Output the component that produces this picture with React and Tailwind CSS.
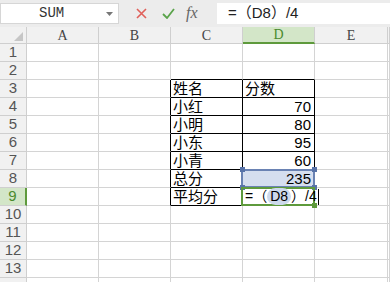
import React from 'react';

const COLS = ['A', 'B', 'C', 'D', 'E', ''];

const DATA = {
  3: ['姓名', '分数'],
  4: ['小红', '70'],
  5: ['小明', '80'],
  6: ['小东', '95'],
  7: ['小青', '60'],
  8: ['总分', '235'],
  9: ['平均分', null],
};

const inTable = (r) => r >= 3 && r <= 9;

function Cell({ r, c }) {
  // c: 0=A ... 5=extra
  let br = 'border-r-[#d4d4d4]';
  let bb = 'border-b-[#d4d4d4]';
  if ((c === 1 || c === 2 || c === 3) && inTable(r)) br = 'border-r-black';
  if ((c === 2 || c === 3) && (r === 2 || inTable(r))) bb = 'border-b-black';

  const row = DATA[r];
  let content = null;

  if (row && c === 2) {
    content = <span className="pl-[2px] text-[15px] leading-[17px] text-black">{row[0]}</span>;
  }

  if (row && c === 3) {
    if (r === 9) {
      return (
        <div className={`relative z-10 h-[18px] border-r border-b ${br} ${bb}`}>
          <div className="absolute -left-[2px] -top-[1px] h-[19px] w-[74px] border-2 border-[#5e9a3c]" />
          <div className="absolute -bottom-[3px] -right-[3px] h-[5px] w-[5px] bg-[#5e9a3c]" />
          <div className="relative flex h-full items-center whitespace-nowrap pl-[2px] text-[14px] leading-[17px] text-black">
            <span className="shrink-0">=（</span>
            <span className="shrink-0 rounded-full bg-[#cdd9ec] px-[3px]">D8</span>
            <span className="shrink-0">）/4</span>
            <span className="ml-[1px] h-[16px] w-[1px] shrink-0 bg-black" />
          </div>
        </div>
      );
    }
    if (r === 8) {
      return (
        <div className={`relative h-[18px] border-r border-b ${br} ${bb} bg-[#d5deef]`}>
          <div className="absolute -left-[2px] -top-[1px] h-[19px] w-[74px] border-2 border-[#6a82b3]" />
          <div className="absolute -left-[3px] -top-[3px] h-[5px] w-[5px] bg-[#5873a8]" />
          <div className="absolute -right-[3px] -top-[3px] h-[5px] w-[5px] bg-[#5873a8]" />
          <div className="absolute -bottom-[3px] -left-[3px] h-[5px] w-[5px] bg-[#5873a8]" />
          <div className="absolute -bottom-[3px] -right-[3px] h-[5px] w-[5px] bg-[#5873a8]" />
          <div className="relative flex h-full items-center justify-end pr-[3px] text-[15px] leading-[17px] text-black">
            {row[1]}
          </div>
        </div>
      );
    }
    const isNum = /^\d+$/.test(row[1]);
    content = (
      <span
        className={`w-full text-[15px] leading-[17px] text-black ${isNum ? 'pr-[3px] text-right' : 'pl-[2px]'}`}
      >
        {row[1]}
      </span>
    );
  }

  return (
    <div className={`flex h-[18px] items-center border-r border-b ${br} ${bb}`}>{content}</div>
  );
}

export default function App() {
  const rows = Array.from({ length: 14 }, (_, i) => i + 1);

  return (
    <div
      className="h-[282px] w-[390px] overflow-hidden bg-white"
      style={{ fontFamily: '"Liberation Sans", "Noto Sans CJK SC", sans-serif' }}
    >
      {/* toolbar */}
      <div className="flex h-[27px] items-center bg-[#ececec] pb-[1px]">
        <div className="relative flex h-[21px] w-[119px] items-center border border-[#d6d6d6] bg-white">
          <span className="ml-[38px] font-['Liberation_Mono'] text-[14px] text-[#333]">SUM</span>
          <svg className="absolute right-[5px] top-[8px]" width="7" height="4" viewBox="0 0 7 4">
            <path d="M0 0h7L3.5 4z" fill="#777" />
          </svg>
        </div>
        <div className="flex w-[98px] items-center">
          <svg className="ml-[17px]" width="11" height="11" viewBox="0 0 11 11">
            <path d="M1 1l9 9M10 1l-9 9" stroke="#e0605a" strokeWidth="1.6" />
          </svg>
          <svg className="ml-[15px]" width="13" height="11" viewBox="0 0 13 11">
            <path d="M1 6l4 4 7-9" stroke="#5aa34a" strokeWidth="1.8" fill="none" />
          </svg>
          <span className="ml-[11px] font-['Liberation_Serif'] text-[16px] italic text-[#666]">fx</span>
        </div>
        <div className="flex h-[21px] flex-1 items-center whitespace-nowrap bg-white pl-[11px] text-[15px] text-[#222]">
          =（D8）/4
        </div>
      </div>

      {/* grid */}
      <div className="grid grid-cols-[27px_72px_72px_72px_72px_73px_1fr]">
        {/* header row */}
        <div className="relative h-[17px] border-r border-b border-[#cfcfcf] bg-[#f1f1f1]">
          <svg className="absolute bottom-[2px] right-[3px]" width="9" height="9" viewBox="0 0 9 9">
            <path d="M9 0v9H0z" fill="#c6c6c6" />
          </svg>
        </div>
        {COLS.map((col, i) => (
          <div
            key={i}
            className={`flex h-[17px] items-center justify-center border-r font-['Liberation_Serif'] text-[14px] ${
              col === 'D'
                ? 'border-b-2 border-r-[#cfcfcf] border-b-[#5e9a3c] bg-[#d3e6c8] text-[#4a8a2e]'
                : 'border-b border-[#cfcfcf] bg-[#f1f1f1] text-[#444]'
            }`}
          >
            {col}
          </div>
        ))}

        {rows.map((r) => (
          <React.Fragment key={r}>
            <div
              className={`flex h-[18px] items-center justify-center border-b text-[15px] ${
                r === 9
                  ? 'border-r-2 border-r-[#5e9a3c] border-b-[#cfcfcf] bg-[#d3e6c8] text-[#4a8a2e]'
                  : 'border-r border-[#cfcfcf] bg-[#f1f1f1] text-[#555]'
              }`}
            >
              {r < 14 ? r : ''}
            </div>
            {COLS.map((_, c) => (
              <Cell key={c} r={r} c={c} />
            ))}
          </React.Fragment>
        ))}
      </div>
    </div>
  );
}
